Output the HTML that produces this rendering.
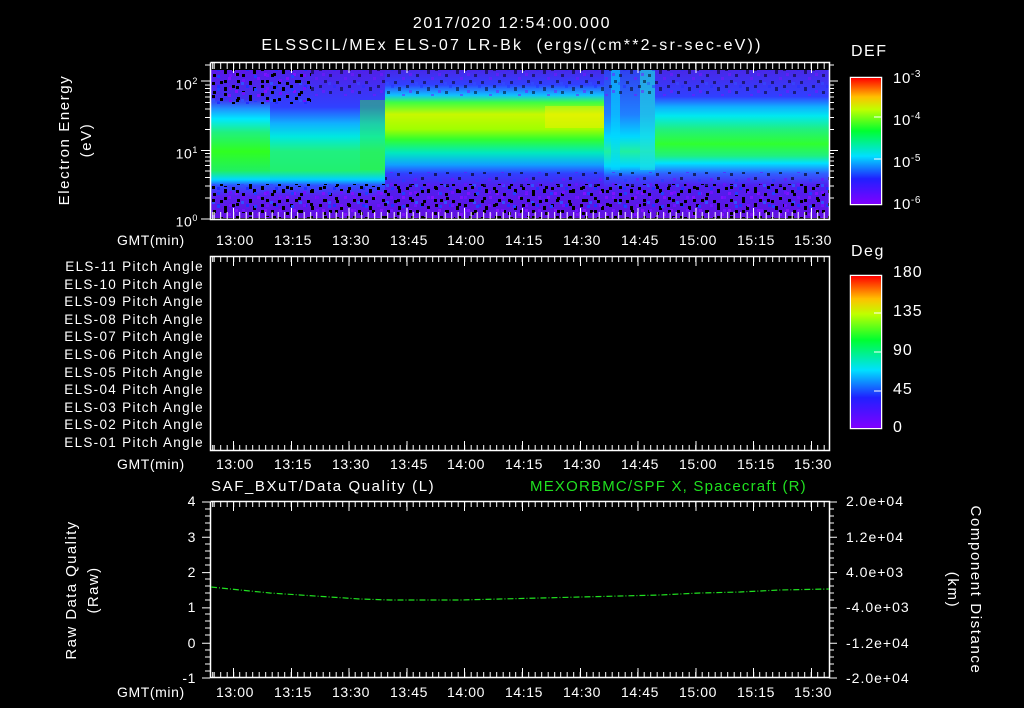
<!DOCTYPE html>
<html><head><meta charset="utf-8">
<style>
body{margin:0;width:1024px;height:708px;background:#000;overflow:hidden;position:relative;font-family:"Liberation Sans",sans-serif;color:#fff}
.t{position:absolute;font-size:14px;white-space:nowrap;line-height:14px;letter-spacing:0.6px}
.r{text-align:right}
.c{text-align:center}
svg{position:absolute;left:0;top:0}
</style></head><body>
<svg width="1024" height="708" viewBox="0 0 1024 708">
<defs>
<linearGradient id="gA" x1="0" y1="70" x2="0" y2="218" gradientUnits="userSpaceOnUse">
<stop offset="0" stop-color="#5a18e8"/><stop offset="0.2" stop-color="#4030f0"/><stop offset="0.26" stop-color="#2090ff"/><stop offset="0.33" stop-color="#00e8ff"/><stop offset="0.42" stop-color="#20f080"/><stop offset="0.55" stop-color="#30ff20"/><stop offset="0.68" stop-color="#20f060"/><stop offset="0.74" stop-color="#00d8ff"/><stop offset="0.78" stop-color="#3050ff"/><stop offset="0.85" stop-color="#5a20f0"/><stop offset="1" stop-color="#6010e0"/>
</linearGradient>
<linearGradient id="gB" x1="0" y1="70" x2="0" y2="218" gradientUnits="userSpaceOnUse">
<stop offset="0" stop-color="#5020e8"/><stop offset="0.25" stop-color="#3040ff"/><stop offset="0.36" stop-color="#10b0ff"/><stop offset="0.45" stop-color="#00e8e0"/><stop offset="0.55" stop-color="#20f080"/><stop offset="0.68" stop-color="#20f070"/><stop offset="0.74" stop-color="#00d0ff"/><stop offset="0.78" stop-color="#3050ff"/><stop offset="0.85" stop-color="#5a20f0"/><stop offset="1" stop-color="#6010e0"/>
</linearGradient>
<linearGradient id="gD" x1="0" y1="70" x2="0" y2="218" gradientUnits="userSpaceOnUse">
<stop offset="0" stop-color="#4828e8"/><stop offset="0.1" stop-color="#3040ff"/><stop offset="0.17" stop-color="#10c0ff"/><stop offset="0.22" stop-color="#40ff40"/><stop offset="0.3" stop-color="#c8f800"/><stop offset="0.4" stop-color="#a0ff00"/><stop offset="0.47" stop-color="#30ff30"/><stop offset="0.56" stop-color="#00e8c0"/><stop offset="0.64" stop-color="#10a0ff"/><stop offset="0.7" stop-color="#3040ff"/><stop offset="0.78" stop-color="#5020f0"/><stop offset="1" stop-color="#6010e0"/>
</linearGradient>
<linearGradient id="gE" x1="0" y1="70" x2="0" y2="218" gradientUnits="userSpaceOnUse">
<stop offset="0" stop-color="#3040f0"/><stop offset="0.3" stop-color="#2080ff"/><stop offset="0.45" stop-color="#00d8ff"/><stop offset="0.55" stop-color="#20f0a0"/><stop offset="0.65" stop-color="#00d8ff"/><stop offset="0.72" stop-color="#3050ff"/><stop offset="0.8" stop-color="#5020f0"/><stop offset="1" stop-color="#6010e0"/>
</linearGradient>
<linearGradient id="gF" x1="0" y1="70" x2="0" y2="218" gradientUnits="userSpaceOnUse">
<stop offset="0" stop-color="#4828e8"/><stop offset="0.18" stop-color="#3040ff"/><stop offset="0.25" stop-color="#10b0ff"/><stop offset="0.31" stop-color="#00e8f0"/><stop offset="0.4" stop-color="#20f080"/><stop offset="0.5" stop-color="#30ff30"/><stop offset="0.58" stop-color="#20f080"/><stop offset="0.63" stop-color="#00e0ff"/><stop offset="0.7" stop-color="#3060ff"/><stop offset="0.78" stop-color="#5020f0"/><stop offset="1" stop-color="#6010e0"/>
</linearGradient>
<linearGradient id="cb1" x1="0" y1="1" x2="0" y2="0">
<stop offset="0" stop-color="#8000ff"/><stop offset="0.2" stop-color="#2020ff"/><stop offset="0.38" stop-color="#00e0ff"/><stop offset="0.58" stop-color="#00ff30"/><stop offset="0.75" stop-color="#c0ff00"/><stop offset="0.85" stop-color="#ffc000"/><stop offset="1" stop-color="#ff0000"/>
</linearGradient>
<pattern id="nz" width="29" height="17" patternUnits="userSpaceOnUse">
<rect x="0" y="0" width="3" height="3" fill="#000"/><rect x="10" y="6" width="3" height="3" fill="#000"/><rect x="21" y="2" width="3" height="4" fill="#000"/><rect x="5" y="12" width="3" height="3" fill="#000"/><rect x="17" y="13" width="3" height="3" fill="#000"/><rect x="3" y="5" width="3" height="3" fill="#8010ff"/><rect x="14" y="0" width="3" height="3" fill="#2030ff"/><rect x="25" y="9" width="3" height="3" fill="#8010ff"/><rect x="9" y="14" width="3" height="3" fill="#3050ff"/>
</pattern>
<pattern id="nz2" width="37" height="13" patternUnits="userSpaceOnUse">
<rect x="2" y="2" width="3" height="3" fill="#000"/><rect x="14" y="8" width="3" height="3" fill="#000"/><rect x="27" y="4" width="3" height="3" fill="#000"/><rect x="20" y="1" width="3" height="3" fill="#7010ff"/><rect x="7" y="9" width="3" height="3" fill="#7010ff"/><rect x="32" y="10" width="3" height="3" fill="#2040ff"/>
</pattern>
</defs>
<rect x="211" y="70" width="60" height="148" fill="url(#gA)"/>
<rect x="270" y="70" width="85" height="148" fill="url(#gB)"/>
<rect x="355" y="70" width="32" height="148" fill="url(#gB)"/>
<rect x="360" y="100" width="27" height="70" fill="#30f040" opacity="0.45"/>
<rect x="385" y="70" width="220" height="148" fill="url(#gD)"/>
<rect x="545" y="106" width="60" height="22" fill="#ffee00" opacity="0.45"/>
<rect x="604" y="70" width="52" height="148" fill="url(#gE)"/>
<rect x="611" y="70" width="9" height="100" fill="#00d8ff" opacity="0.6"/>
<rect x="640" y="70" width="16" height="100" fill="#20e0e0" opacity="0.6"/>
<rect x="655" y="70" width="174" height="148" fill="url(#gF)"/>
<rect x="211" y="70" width="100" height="34" fill="url(#nz)"/>
<rect x="211" y="72" width="100" height="30" fill="url(#nz2)"/>
<rect x="311" y="70" width="518" height="26" fill="url(#nz)" opacity="0.5"/>
<rect x="211" y="184" width="618" height="34" fill="url(#nz)"/>
<rect x="211" y="186" width="618" height="32" fill="url(#nz2)"/>
<rect x="385" y="172" width="444" height="14" fill="url(#nz2)" opacity="0.6"/>
<g fill="none" stroke="#fff" stroke-width="1.5">
<path d="M210.5 62.5V219.5H829.5V62.5H210.5"/>
<rect x="210.5" y="256.5" width="619" height="194"/>
<path d="M210.5 501.5V677.5H829.5V501.5H210.5"/>
<rect x="850.5" y="77.5" width="31" height="127"/>
<rect x="850.5" y="275.5" width="31" height="153"/>
</g>
<rect x="851" y="78" width="30" height="126" fill="url(#cb1)"/>
<rect x="851" y="276" width="30" height="152" fill="url(#cb1)"/>
<g stroke="#fff" stroke-width="1">
<path d="M201 81H210M201 150.5H210M201 219H210M205 198H210M205 186H210M205 177.5H210M205 171H210M205 165.5H210M205 161H210M205 157H210M205 153.5H210M205 129.5H210M205 117.5H210M205 109H210M205 102.5H210M205 97H210M205 92.5H210M205 88.5H210M205 85H210M205 65H210"/>
<path d="M829 81H838M829 150.5H838M829 198H834M829 186H834M829 177.5H834M829 171H834M829 165.5H834M829 161H834M829 157H834M829 153.5H834M829 129.5H834M829 117.5H834M829 109H834M829 102.5H834M829 97H834M829 92.5H834M829 88.5H834M829 85H834M829 65H834"/>
<path d="M202 502H210M202 537.3H210M202 572.6H210M202 607.9H210M202 643.2H210M202 678H210M205 509H210M205 516H210M205 523H210M205 530H210M205 544H210M205 551H210M205 558H210M205 565H210M205 579H210M205 586H210M205 593H210M205 600H210M205 614H210M205 621H210M205 628H210M205 635H210M205 650H210M205 657H210M205 664H210M205 671H210"/>
<path d="M829 502H837M829 537.3H837M829 572.6H837M829 607.9H837M829 643.2H837M829 678H837M829 509H834M829 516H834M829 523H834M829 530H834M829 544H834M829 551H834M829 558H834M829 565H834M829 579H834M829 586H834M829 593H834M829 600H834M829 614H834M829 621H834M829 628H834M829 635H834M829 650H834M829 657H834M829 664H834M829 671H834"/>
<path d="M874 117H881M874 159H881M874 313H881M874 352H881M874 391H881"/>
</g>
<polyline fill="none" stroke="#20e020" stroke-width="1.2" stroke-dasharray="6 2 1 2" points="211,587 240,590 270,593 300,595 330,597 360,599 390,600 420,600 460,600 500,599 540,598 580,597 620,596 660,595 700,593 740,592 780,590 829,589"/>
</svg>
<div style="position:absolute;left:211px;top:63px;width:618px;height:6px;background:repeating-linear-gradient(90deg,#fff 0 1px,transparent 1px 6.42px);background-position:2.7px 0"></div>
<div style="position:absolute;left:211px;top:63px;width:618px;height:10px;background:repeating-linear-gradient(90deg,#fff 0 1px,transparent 1px 57.8px);background-position:22px 0"></div>
<div style="position:absolute;left:211px;top:212px;width:618px;height:7px;background:repeating-linear-gradient(90deg,#fff 0 1px,transparent 1px 6.42px);background-position:2.7px 0"></div>
<div style="position:absolute;left:211px;top:208px;width:618px;height:11px;background:repeating-linear-gradient(90deg,#fff 0 1px,transparent 1px 57.8px);background-position:22px 0"></div>
<div style="position:absolute;left:211px;top:257px;width:618px;height:5px;background:repeating-linear-gradient(90deg,#fff 0 1px,transparent 1px 6.42px);background-position:2.7px 0"></div>
<div style="position:absolute;left:211px;top:257px;width:618px;height:9px;background:repeating-linear-gradient(90deg,#fff 0 1px,transparent 1px 57.8px);background-position:22px 0"></div>
<div style="position:absolute;left:211px;top:445px;width:618px;height:5px;background:repeating-linear-gradient(90deg,#fff 0 1px,transparent 1px 6.42px);background-position:2.7px 0"></div>
<div style="position:absolute;left:211px;top:441px;width:618px;height:9px;background:repeating-linear-gradient(90deg,#fff 0 1px,transparent 1px 57.8px);background-position:22px 0"></div>
<div style="position:absolute;left:211px;top:502px;width:618px;height:5px;background:repeating-linear-gradient(90deg,#fff 0 1px,transparent 1px 6.42px);background-position:2.7px 0"></div>
<div style="position:absolute;left:211px;top:502px;width:618px;height:9px;background:repeating-linear-gradient(90deg,#fff 0 1px,transparent 1px 57.8px);background-position:22px 0"></div>
<div style="position:absolute;left:211px;top:672px;width:618px;height:5px;background:repeating-linear-gradient(90deg,#fff 0 1px,transparent 1px 6.42px);background-position:2.7px 0"></div>
<div style="position:absolute;left:211px;top:668px;width:618px;height:9px;background:repeating-linear-gradient(90deg,#fff 0 1px,transparent 1px 57.8px);background-position:22px 0"></div>

<div class="t c" style="left:262px;top:16px;width:500px;font-size:16px;line-height:16px;letter-spacing:1.6px">2017/020 12:54:00.000</div>
<div class="t c" style="left:162px;top:38px;width:700px;font-size:16px;line-height:16px;letter-spacing:2.2px">ELSSCIL/MEx ELS-07 LR-Bk &nbsp;(ergs/(cm**2-sr-sec-eV))</div>
<div class="t" style="left:851px;top:45px;font-size:16px;letter-spacing:1.5px">DEF</div>
<div class="t" style="left:893px;top:68px;font-size:15px">10<sup style="font-size:10px">-3</sup></div>
<div class="t" style="left:893px;top:110px;font-size:15px">10<sup style="font-size:10px">-4</sup></div>
<div class="t" style="left:893px;top:152px;font-size:15px">10<sup style="font-size:10px">-5</sup></div>
<div class="t" style="left:893px;top:194px;font-size:15px">10<sup style="font-size:10px">-6</sup></div>
<div class="t r" style="left:160px;top:74px;width:38px">10<sup style="font-size:9px">2</sup></div>
<div class="t r" style="left:160px;top:143px;width:38px">10<sup style="font-size:9px">1</sup></div>
<div class="t r" style="left:160px;top:211px;width:38px">10<sup style="font-size:9px">0</sup></div>
<div class="t c" style="left:-25px;top:133px;width:180px;font-size:15px;letter-spacing:1.6px;transform:rotate(-90deg)">Electron Energy</div>
<div class="t c" style="left:-3px;top:133px;width:180px;font-size:15px;letter-spacing:1.6px;transform:rotate(-90deg)">(eV)</div>

<div class="t" style="left:117px;top:233px">GMT(min)</div>
<div class="t" style="left:117px;top:457px">GMT(min)</div>
<div class="t" style="left:117px;top:685px">GMT(min)</div>
<div class="t" style="left:216px;top:233px">13:00</div><div class="t" style="left:274px;top:233px">13:15</div><div class="t" style="left:332px;top:233px">13:30</div><div class="t" style="left:390px;top:233px">13:45</div><div class="t" style="left:447px;top:233px">14:00</div><div class="t" style="left:505px;top:233px">14:15</div><div class="t" style="left:563px;top:233px">14:30</div><div class="t" style="left:621px;top:233px">14:45</div><div class="t" style="left:679px;top:233px">15:00</div><div class="t" style="left:737px;top:233px">15:15</div><div class="t" style="left:794px;top:233px">15:30</div>
<div class="t" style="left:216px;top:457px">13:00</div><div class="t" style="left:274px;top:457px">13:15</div><div class="t" style="left:332px;top:457px">13:30</div><div class="t" style="left:390px;top:457px">13:45</div><div class="t" style="left:447px;top:457px">14:00</div><div class="t" style="left:505px;top:457px">14:15</div><div class="t" style="left:563px;top:457px">14:30</div><div class="t" style="left:621px;top:457px">14:45</div><div class="t" style="left:679px;top:457px">15:00</div><div class="t" style="left:737px;top:457px">15:15</div><div class="t" style="left:794px;top:457px">15:30</div>
<div class="t" style="left:216px;top:685px">13:00</div><div class="t" style="left:274px;top:685px">13:15</div><div class="t" style="left:332px;top:685px">13:30</div><div class="t" style="left:390px;top:685px">13:45</div><div class="t" style="left:447px;top:685px">14:00</div><div class="t" style="left:505px;top:685px">14:15</div><div class="t" style="left:563px;top:685px">14:30</div><div class="t" style="left:621px;top:685px">14:45</div><div class="t" style="left:679px;top:685px">15:00</div><div class="t" style="left:737px;top:685px">15:15</div><div class="t" style="left:794px;top:685px">15:30</div>

<div class="t r" style="left:20px;top:258px;width:184px;line-height:17.6px;font-size:13.5px;letter-spacing:1.3px">ELS-11 Pitch Angle<br>ELS-10 Pitch Angle<br>ELS-09 Pitch Angle<br>ELS-08 Pitch Angle<br>ELS-07 Pitch Angle<br>ELS-06 Pitch Angle<br>ELS-05 Pitch Angle<br>ELS-04 Pitch Angle<br>ELS-03 Pitch Angle<br>ELS-02 Pitch Angle<br>ELS-01 Pitch Angle</div>
<div class="t" style="left:851px;top:245px;font-size:16px;letter-spacing:1.5px">Deg</div>
<div class="t" style="left:893px;top:266px;font-size:16px;letter-spacing:1px">180</div>
<div class="t" style="left:893px;top:305px;font-size:16px;letter-spacing:1px">135</div>
<div class="t" style="left:893px;top:344px;font-size:16px;letter-spacing:1px">90</div>
<div class="t" style="left:893px;top:383px;font-size:16px;letter-spacing:1px">45</div>
<div class="t" style="left:893px;top:421px;font-size:16px">0</div>

<div class="t" style="left:211px;top:480px;font-size:15px;letter-spacing:1.6px">SAF_BXuT/Data Quality (L)</div>
<div class="t" style="left:530px;top:480px;font-size:15px;letter-spacing:1.2px;color:#20e020">MEXORBMC/SPF X, Spacecraft (R)</div>
<div class="t r" style="left:170px;top:494px;width:26px">4</div>
<div class="t r" style="left:170px;top:530px;width:26px">3</div>
<div class="t r" style="left:170px;top:565px;width:26px">2</div>
<div class="t r" style="left:170px;top:600px;width:26px">1</div>
<div class="t r" style="left:170px;top:636px;width:26px">0</div>
<div class="t r" style="left:170px;top:671px;width:26px">-1</div>
<div class="t" style="left:846px;top:494px;letter-spacing:1px">2.0e+04</div>
<div class="t" style="left:846px;top:530px;letter-spacing:1px">1.2e+04</div>
<div class="t" style="left:846px;top:565px;letter-spacing:1px">4.0e+03</div>
<div class="t" style="left:846px;top:600px;letter-spacing:1px">-4.0e+03</div>
<div class="t" style="left:846px;top:636px;letter-spacing:1px">-1.2e+04</div>
<div class="t" style="left:846px;top:671px;letter-spacing:1px">-2.0e+04</div>
<div class="t c" style="left:-28px;top:583px;width:200px;font-size:15px;letter-spacing:1.4px;transform:rotate(-90deg)">Raw Data Quality</div>
<div class="t c" style="left:-6px;top:583px;width:200px;font-size:15px;letter-spacing:1.4px;transform:rotate(-90deg)">(Raw)</div>
<div class="t c" style="left:875px;top:583px;width:200px;font-size:15px;letter-spacing:1.6px;transform:rotate(90deg)">Component Distance</div>
<div class="t c" style="left:852px;top:583px;width:200px;font-size:15px;letter-spacing:1.6px;transform:rotate(90deg)">(km)</div>
</body></html>
